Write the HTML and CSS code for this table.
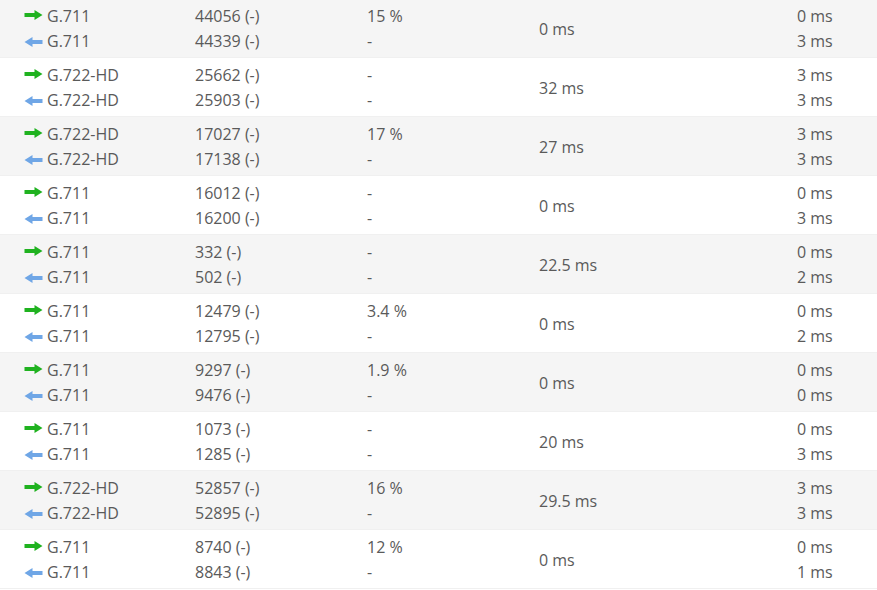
FILE: index.html
```html
<!DOCTYPE html>
<html>
<head>
<meta charset="utf-8">
<link rel="stylesheet" href="styles.css">
</head>
<body>
<svg width="0" height="0" class="defs">
  <defs>
    <symbol id="out" viewBox="0 0 18 10"><path d="M0 3H10V0L18 5L10 10V7H0Z" fill="#1fb21f"/></symbol>
    <symbol id="in" viewBox="0 0 18 10"><path d="M18 3H8V0L0 5L8 10V7H18Z" fill="#6fa6e6"/></symbol>
  </defs>
</svg>
<div class="table" id="t"></div>
<script>
const data = [
 ["G.711","44056","44339","15 %","-","0 ms","0 ms","3 ms"],
 ["G.722-HD","25662","25903","-","-","32 ms","3 ms","3 ms"],
 ["G.722-HD","17027","17138","17 %","-","27 ms","3 ms","3 ms"],
 ["G.711","16012","16200","-","-","0 ms","0 ms","3 ms"],
 ["G.711","332","502","-","-","22.5 ms","0 ms","2 ms"],
 ["G.711","12479","12795","3.4 %","-","0 ms","0 ms","2 ms"],
 ["G.711","9297","9476","1.9 %","-","0 ms","0 ms","0 ms"],
 ["G.711","1073","1285","-","-","20 ms","0 ms","3 ms"],
 ["G.722-HD","52857","52895","16 %","-","29.5 ms","3 ms","3 ms"],
 ["G.711","8740","8843","12 %","-","0 ms","0 ms","1 ms"]
];
const t = document.getElementById('t');
t.innerHTML = data.map(r => `
<div class="row">
  <div class="cell codec">
    <div class="line"><svg class="arrow up"><use href="#out"/></svg>${r[0]}</div>
    <div class="line"><svg class="arrow"><use href="#in"/></svg>${r[0]}</div>
  </div>
  <div class="cell"><div class="line">${r[1]} (-)</div><div class="line">${r[2]} (-)</div></div>
  <div class="cell"><div class="line">${r[3]}</div><div class="line">${r[4]}</div></div>
  <div class="cell mid">${r[5]}</div>
  <div class="cell"><div class="line">${r[6]}</div><div class="line">${r[7]}</div></div>
</div>`).join('');
</script>
</body>
</html>
```
FILE: styles.css
```css
html, body {
  margin: 0;
  padding: 0;
  background: #fff;
}
body {
  font-family: "Open Sans", "Liberation Sans", sans-serif;
  font-size: 16px;
  color: #5a5a5a;
}
.defs {
  position: absolute;
}
.table {
  margin-top: -1px;
}
.row {
  display: grid;
  grid-template-columns: 171px 172px 172px 258px 1fr;
  padding: 5px 0 3px 24px;
  border-bottom: 1px solid #f0f0f0;
  height: 50px;
}
.row:nth-child(odd) {
  background: #f5f5f5;
}
.line {
  height: 25px;
  line-height: 25px;
  white-space: nowrap;
  display: flex;
  align-items: center;
}
.mid {
  display: flex;
  align-items: center;
}
.arrow {
  width: 19px;
  height: 10px;
  margin-right: 4px;
  flex: none;
}
.arrow.up {
  position: relative;
  top: -2px;
}
```
